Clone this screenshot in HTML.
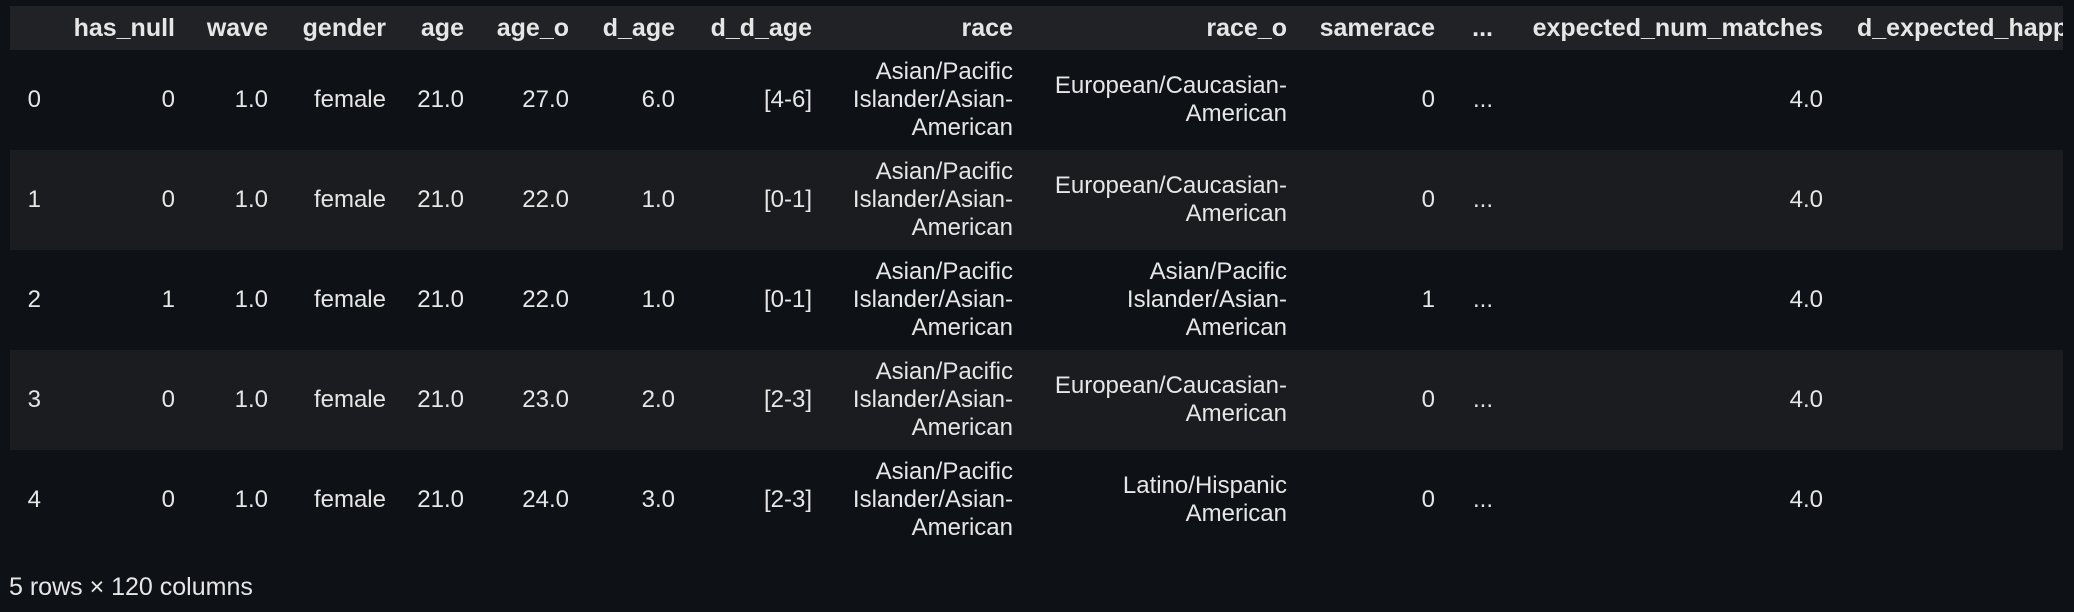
<!DOCTYPE html>
<html><head><meta charset="utf-8"><style>
html,body{margin:0;padding:0;background:#0e1116;width:2074px;height:612px;overflow:hidden}
body{font-family:"Liberation Sans",sans-serif;color:#e6e6e6;font-size:24px}
#t{position:absolute;left:10px;top:6px;width:2053px;height:544px;overflow:hidden}
.r{position:absolute;left:0;width:2053px}
.h{top:0;height:44px;background:#202226;font-weight:bold;font-size:25px}
.s{background:#1b1c20}
.c{position:absolute;top:0;height:100%;display:flex;align-items:center;justify-content:flex-end;text-align:right;line-height:28px;white-space:nowrap}
.f{position:absolute;left:9px;top:573px;font-size:25px}
</style></head><body>
<div id="t">
<div class="r h">
<div class="c" style="right:calc(2053px - 165px)">has_null</div>
<div class="c" style="right:calc(2053px - 258px)">wave</div>
<div class="c" style="right:calc(2053px - 376px)">gender</div>
<div class="c" style="right:calc(2053px - 454px)">age</div>
<div class="c" style="right:calc(2053px - 559px)">age_o</div>
<div class="c" style="right:calc(2053px - 665px)">d_age</div>
<div class="c" style="right:calc(2053px - 802px)">d_d_age</div>
<div class="c" style="right:calc(2053px - 1003px)">race</div>
<div class="c" style="right:calc(2053px - 1277px)">race_o</div>
<div class="c" style="right:calc(2053px - 1425px)">samerace</div>
<div class="c" style="right:calc(2053px - 1483px)">...</div>
<div class="c" style="right:calc(2053px - 1813px)">expected_num_matches</div>
<div class="c" style="left:1847px;justify-content:flex-start">d_expected_happy_with_sd_people</div>
</div>
</div>
<script>
var rows=[
["0","0","Asian/Pacific<br>Islander/Asian-<br>American","European/Caucasian-<br>American","0","27.0","6.0","[4-6]"],
["1","0","Asian/Pacific<br>Islander/Asian-<br>American","European/Caucasian-<br>American","0","22.0","1.0","[0-1]"],
["2","1","Asian/Pacific<br>Islander/Asian-<br>American","Asian/Pacific<br>Islander/Asian-<br>American","1","22.0","1.0","[0-1]"],
["3","0","Asian/Pacific<br>Islander/Asian-<br>American","European/Caucasian-<br>American","0","23.0","2.0","[2-3]"],
["4","0","Asian/Pacific<br>Islander/Asian-<br>American","Latino/Hispanic<br>American","0","24.0","3.0","[2-3]"]];
var t=document.getElementById('t'),h='';
function c(r,x){return '<div class="c" style="right:'+(2053-x)+'px">'+r+'</div>';}
rows.forEach(function(d,i){
h+='<div class="r'+(i%2?' s':'')+'" style="top:'+(44+i*100)+'px;height:100px">'+
c(d[0],31)+c(d[1],165)+c('1.0',258)+c('female',376)+c('21.0',454)+c(d[5],559)+c(d[6],665)+c(d[7],802)+
c(d[2],1003)+c(d[3],1277)+c(d[4],1425)+c('...',1483)+c('4.0',1813)+'</div>';});
t.insertAdjacentHTML('beforeend',h);
</script>
<div class="f">5 rows × 120 columns</div>
</body></html>
